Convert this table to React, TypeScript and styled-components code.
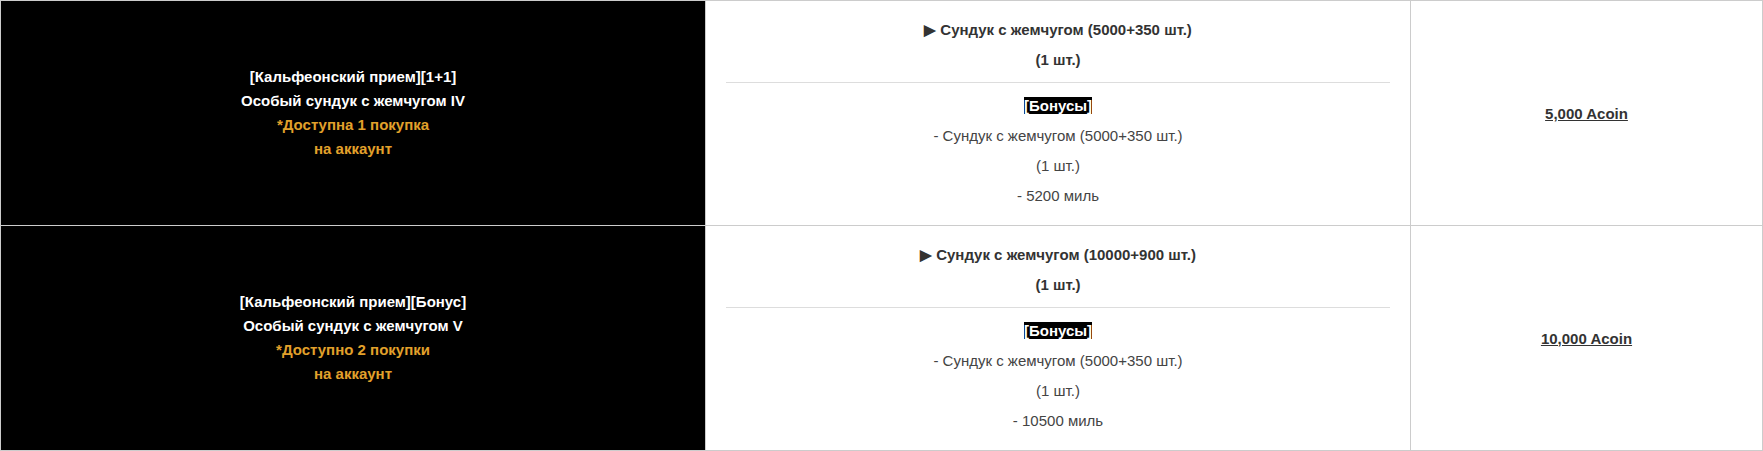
import { createGlobalStyle } from 'styled-components'
import styled from 'styled-components'

type Offer = {
  tag: string
  name: string
  limit: string
  main: string
  bonus: string
  miles: string
  price: string
}

const offers: Offer[] = [
  {
    tag: '[Кальфеонский прием][1+1]',
    name: 'Особый сундук с жемчугом IV',
    limit: '*Доступна 1 покупка',
    main: '▶ Сундук с жемчугом (5000+350 шт.)',
    bonus: '- Сундук с жемчугом (5000+350 шт.)',
    miles: '- 5200 миль',
    price: '5,000 Acoin',
  },
  {
    tag: '[Кальфеонский прием][Бонус]',
    name: 'Особый сундук с жемчугом V',
    limit: '*Доступно 2 покупки',
    main: '▶ Сундук с жемчугом (10000+900 шт.)',
    bonus: '- Сундук с жемчугом (5000+350 шт.)',
    miles: '- 10500 миль',
    price: '10,000 Acoin',
  },
]

export default function App() {
  return (
    <>
      <GlobalStyle />
      <Table>
        <colgroup>
          <col style={{ width: 705 }} />
          <col style={{ width: 705 }} />
          <col />
        </colgroup>
        <tbody>
          {offers.map((o) => (
            <Row key={o.name}>
              <TitleCell>
                <Line>{o.tag}</Line>
                <Line>{o.name}</Line>
                <Line $accent>{o.limit}</Line>
                <Line $accent>на аккаунт</Line>
              </TitleCell>
              <ContentCell>
                <Item $bold>{o.main}</Item>
                <Item $bold>(1 шт.)</Item>
                <Divider />
                <Item>
                  <Badge>[Бонусы]</Badge>
                </Item>
                <Item>{o.bonus}</Item>
                <Item>(1 шт.)</Item>
                <Item>{o.miles}</Item>
              </ContentCell>
              <PriceCell>
                <Price href="#">{o.price}</Price>
              </PriceCell>
            </Row>
          ))}
        </tbody>
      </Table>
    </>
  )
}

// Style

const GlobalStyle = createGlobalStyle`
  body {
    margin: 0;
    background: #fff;
    font-family: "Liberation Sans", Arial, sans-serif;
  }
`

const Table = styled.table`
  width: 1763px;
  border-collapse: collapse;
  table-layout: fixed;
  font-size: 15px;
`

const Row = styled.tr`
  height: 225px;
`

const Cell = styled.td`
  border: 1px solid #cccccc;
  text-align: center;
  vertical-align: middle;
`

const TitleCell = styled(Cell)`
  background: #000;
  color: #fff;
  font-weight: bold;
`

const Line = styled.div<{ $accent?: boolean }>`
  line-height: 24px;
  color: ${(p) => (p.$accent ? '#e2a12b' : '#fff')};
`

const ContentCell = styled(Cell)`
  padding: 14px 20px;
  color: #444;
`

const Item = styled.div<{ $bold?: boolean }>`
  line-height: 30px;
  font-weight: ${(p) => (p.$bold ? 'bold' : 'normal')};
  color: ${(p) => (p.$bold ? '#333' : '#444')};
`

const Divider = styled.hr`
  border: 0;
  border-top: 1px solid #dddddd;
  margin: 7px 0 8px;
`

const Badge = styled.span`
  background: #000;
  color: #fff;
  font-weight: bold;
`

const PriceCell = styled(Cell)`
  font-weight: bold;
`

const Price = styled.a`
  color: #333;
  text-decoration: underline;
`
